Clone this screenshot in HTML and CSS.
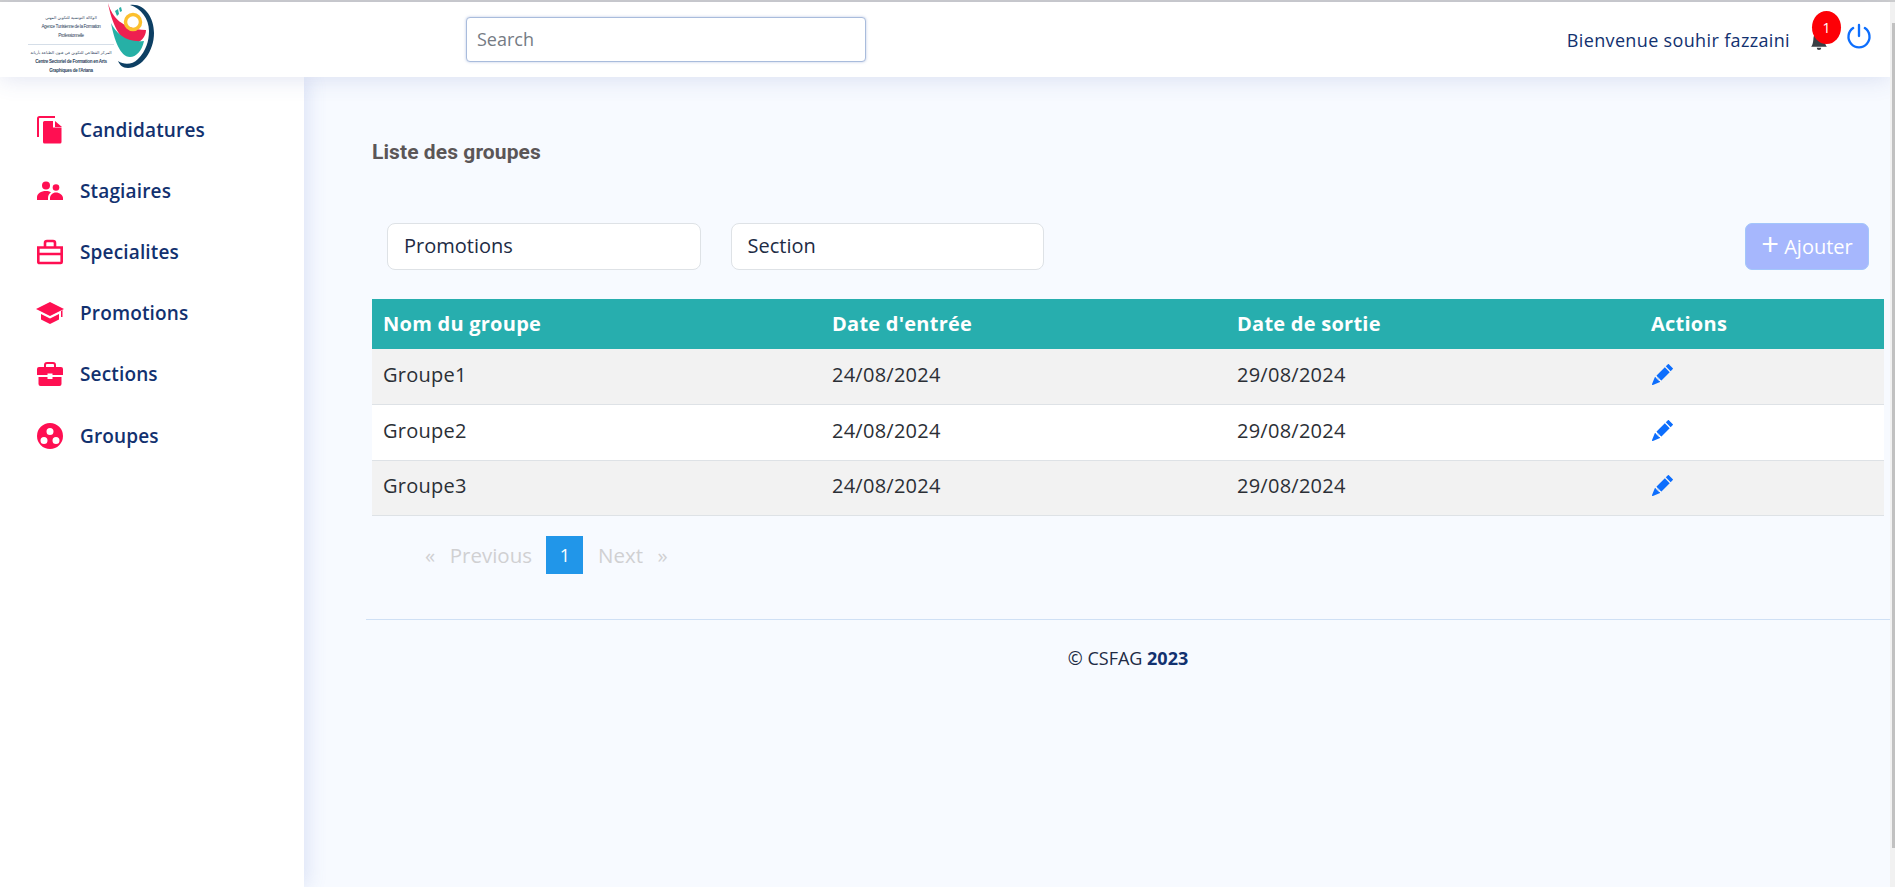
FILE: index.html
```html
<!DOCTYPE html>
<html lang="fr">
<head>
    <meta charset="UTF-8">
    <title>Liste des groupes</title>
    <link rel="stylesheet" href="styles.css">
</head>
<body>
    <div class="page">
        <header class="topbar">
            <div class="logo">
                <div class="logo-text">
                    <p class="logo-ar" dir="rtl">الوكالة التونسية للتكوين المهني</p>
                    <p>Agence Tunisienne de la Formation</p>
                    <p>Professionnelle</p>
                    <hr class="logo-rule">
                    <p class="logo-ar" dir="rtl">المركز القطاعي للتكوين في فنون الطباعة بأريانة</p>
                    <p class="logo-bold">Centre Sectoriel de Formation en Arts</p>
                    <p class="logo-bold">Graphiques de l'Ariana</p>
                </div>
                <svg class="logo-mark" viewBox="0 0 46 65" aria-hidden="true">
                    <path d="M22 2 C36 0 46 14 46 30 C46 48 34 65 20 65 C14 65 12 62 10 58 C16 62 24 62 30 56 C38 48 41 38 41 28 C41 16 33 5 22 2Z" fill="#0d3f63"/>
                    <path d="M0 0 C4 14 14 26 38 27 C38 34 32 41 24 40 C12 39 3 18 0 0Z" fill="#ee2050"/>
                    <path d="M3 20 C8 30 18 40 36 38 C34 48 28 54 22 54 C12 54 6 36 3 20Z" fill="#26b0a6"/>
                    <circle cx="25" cy="19" r="7.500" fill="none" stroke="#fcc02e" stroke-width="3.500"/>
                    <path d="M7 8 l3 -2 l1 5 l-2 2Z M11 5 l2 -1 l1 4 l-2 1Z" fill="#26b0a6"/>
                </svg>
            </div>
            <input class="search" type="text" placeholder="Search">
            <div class="user-box">
                <span class="welcome">Bienvenue souhir fazzaini</span>
                <span class="bell">
                    <svg viewBox="0 0 16 16" aria-hidden="true"><path d="M8 16a2 2 0 0 0 2-2H6a2 2 0 0 0 2 2zm.995-14.901a1 1 0 1 0-1.990 0A5.002 5.002 0 0 0 3 6c0 1.098-.500 6-2 7h14c-1.500-1-2-5.902-2-7 0-2.420-1.720-4.440-4.005-4.901z" fill="#3a3f45"/></svg>
                    <span class="badge">1</span>
                </span>
                <svg class="power" viewBox="0 0 24 24" aria-hidden="true"><path d="M12 2.500v9.500" /><path d="M7 5.200a9 9 0 1 0 10 0" /></svg>
            </div>
        </header>

        <div class="layout">
            <aside class="sidebar">
                <a class="nav-item" href="#">
                    <svg viewBox="0 0 26 28" aria-hidden="true"><path d="M1 21V2.500A1.500 1.500 0 0 1 2.500 1H18" fill="none" stroke="#ff0f52" stroke-width="2"/><path d="M6 6.500A1.500 1.500 0 0 1 7.500 5H16v6.500h8.500V26a1.500 1.500 0 0 1-1.500 1.500H7.500A1.500 1.500 0 0 1 6 26Z"/><path d="M18 5l7 6h-7Z"/></svg>
                    Candidatures
                </a>
                <a class="nav-item" href="#">
                    <svg viewBox="0 0 26 20" aria-hidden="true"><circle cx="9" cy="4.500" r="4"/><circle cx="19" cy="6.500" r="3.300"/><path d="M0 19v-2.500C0 12.500 4 10 9 10c2 0 3.500.400 5 1.200-2 1.400-3 3.400-3 5.800v2Z"/><path d="M13 19v-2c0-3 2.600-5.500 6-5.500s7 2.500 7 5.500v2Z"/></svg>
                    Stagiaires
                </a>
                <a class="nav-item" href="#">
                    <svg viewBox="0 0 26 24" aria-hidden="true"><path d="M1.300 7.500h23.400v14.500a1 1 0 0 1-1 1H2.300a1 1 0 0 1-1-1ZM1.300 14h23.400M8 7V3a2 2 0 0 1 2-2h6a2 2 0 0 1 2 2v4" fill="none" stroke="#ff0f52" stroke-width="2.600"/></svg>
                    Specialites
                </a>
                <a class="nav-item" href="#">
                    <svg viewBox="1 0 26 22" aria-hidden="true"><path d="M14 0 28 7l-14 7L0 7Z"/><path d="M5 12l9 4.500 9-4.500v5.500L14 22 5 17.500Z"/><path d="M25 9v6h1.500V8Z"/></svg>
                    Promotions
                </a>
                <a class="nav-item" href="#">
                    <svg viewBox="0 0 26 24" aria-hidden="true"><path d="M8 6V3a2 2 0 0 1 2-2h6a2 2 0 0 1 2 2v3" fill="none" stroke="#ff0f52" stroke-width="2"/><path d="M2 5h22a2 2 0 0 1 2 2v6H15.500v-1.500h-5V13H0V7a2 2 0 0 1 2-2Z"/><path d="M1.500 15h9v2h5v-2h9v7a2 2 0 0 1-2 2h-19a2 2 0 0 1-2-2Z"/></svg>
                    Sections
                </a>
                <a class="nav-item" href="#">
                    <svg viewBox="0 0 26 26" aria-hidden="true"><path fill-rule="evenodd" d="M13 0a13 13 0 1 1 0 26 13 13 0 0 1 0-26Zm0 5a3.500 3.500 0 1 0 0 7 3.500 3.500 0 0 0 0-7ZM7 14a3.500 3.500 0 1 0 0 7 3.500 3.500 0 0 0 0-7Zm12 0a3.500 3.500 0 1 0 0 7 3.500 3.500 0 0 0 0-7Z"/></svg>
                    Groupes
                </a>
            </aside>

            <main class="content">
                <h2 class="page-title">Liste des groupes</h2>

                <div class="filters">
                    <div class="select-box">Promotions</div>
                    <div class="select-box">Section</div>
                    <button class="add-btn" type="button"><span class="plus">+</span> Ajouter</button>
                </div>

                <table class="groups">
                    <thead>
                        <tr>
                            <th class="col-name">Nom du groupe</th>
                            <th class="col-in">Date d'entrée</th>
                            <th class="col-out">Date de sortie</th>
                            <th>Actions</th>
                        </tr>
                    </thead>
                    <tbody>
                        <tr>
                            <td>Groupe1</td>
                            <td>24/08/2024</td>
                            <td>29/08/2024</td>
                            <td><svg class="pencil" viewBox="0 0 16 16" aria-hidden="true"><path d="M12.854.146a.500.500 0 0 0-.707 0L10.500 1.793 14.207 5.500l1.647-1.646a.500.500 0 0 0 0-.708l-3-3zm.646 6.061L9.793 2.500 3.293 9H3.500a.500.500 0 0 1 .500.500v.500h.500a.500.500 0 0 1 .500.500v.500h.500a.500.500 0 0 1 .500.500v.500h.500a.500.500 0 0 1 .500.500v.207l6.500-6.500zm-7.468 7.468A.500.500 0 0 1 6 13.500V13h-.500a.500.500 0 0 1-.500-.500V12h-.500a.500.500 0 0 1-.500-.500V11h-.500a.500.500 0 0 1-.500-.500V10h-.500a.499.499 0 0 1-.175-.032l-.179.178a.500.500 0 0 0-.110.168l-2 5a.500.500 0 0 0 .650.650l5-2a.500.500 0 0 0 .168-.110l.178-.178z"/></svg></td>
                        </tr>
                        <tr>
                            <td>Groupe2</td>
                            <td>24/08/2024</td>
                            <td>29/08/2024</td>
                            <td><svg class="pencil" viewBox="0 0 16 16" aria-hidden="true"><path d="M12.854.146a.500.500 0 0 0-.707 0L10.500 1.793 14.207 5.500l1.647-1.646a.500.500 0 0 0 0-.708l-3-3zm.646 6.061L9.793 2.500 3.293 9H3.500a.500.500 0 0 1 .500.500v.500h.500a.500.500 0 0 1 .500.500v.500h.500a.500.500 0 0 1 .500.500v.500h.500a.500.500 0 0 1 .500.500v.207l6.500-6.500zm-7.468 7.468A.500.500 0 0 1 6 13.500V13h-.500a.500.500 0 0 1-.500-.500V12h-.500a.500.500 0 0 1-.500-.500V11h-.500a.500.500 0 0 1-.500-.500V10h-.500a.499.499 0 0 1-.175-.032l-.179.178a.500.500 0 0 0-.110.168l-2 5a.500.500 0 0 0 .650.650l5-2a.500.500 0 0 0 .168-.110l.178-.178z"/></svg></td>
                        </tr>
                        <tr>
                            <td>Groupe3</td>
                            <td>24/08/2024</td>
                            <td>29/08/2024</td>
                            <td><svg class="pencil" viewBox="0 0 16 16" aria-hidden="true"><path d="M12.854.146a.500.500 0 0 0-.707 0L10.500 1.793 14.207 5.500l1.647-1.646a.500.500 0 0 0 0-.708l-3-3zm.646 6.061L9.793 2.500 3.293 9H3.500a.500.500 0 0 1 .500.500v.500h.500a.500.500 0 0 1 .500.500v.500h.500a.500.500 0 0 1 .500.500v.500h.500a.500.500 0 0 1 .500.500v.207l6.500-6.500zm-7.468 7.468A.500.500 0 0 1 6 13.500V13h-.500a.500.500 0 0 1-.500-.500V12h-.500a.500.500 0 0 1-.500-.500V11h-.500a.500.500 0 0 1-.500-.500V10h-.500a.499.499 0 0 1-.175-.032l-.179.178a.500.500 0 0 0-.110.168l-2 5a.500.500 0 0 0 .650.650l5-2a.500.500 0 0 0 .168-.110l.178-.178z"/></svg></td>
                        </tr>
                    </tbody>
                </table>

                <div class="pagination">
                    <span>«</span>
                    <span>Previous</span>
                    <span class="current">1</span>
                    <span>Next</span>
                    <span>»</span>
                </div>

                <footer class="footer">© CSFAG <b>2023</b></footer>
            </main>
        </div>
        <div class="scrollbar"><div class="scroll-thumb"></div></div>
    </div>
</body>
</html>
```

FILE: styles.css
```css
* {
    box-sizing: border-box;
}
html, body {
    height: 100%;
    margin: 0;
    overflow: hidden;
}
body {
    font-family: "Open Sans", Arial, sans-serif;
    background-color: #f7faff;
    color: #2b2f36;
}
.page {
    position: relative;
    height: 887px;
    display: flex;
    flex-direction: column;
    border-top: 2px solid #cfcfcf;
    padding-right: 5px;
}

/* top bar */
.topbar {
    height: 75px;
    flex: none;
    display: flex;
    align-items: center;
    background: white;
    position: relative;
    z-index: 2;
    box-shadow: 0 2px 22px rgba(70, 90, 170, 0.16);
    padding-right: 17px;
}
.logo {
    width: 466px;
    height: 100%;
    flex: none;
    display: flex;
    align-items: flex-start;
    padding-left: 28px;
}
.logo-text {
    width: 86px;
    flex: none;
    padding-top: 11px;
    text-align: center;
    font-family: "Liberation Sans", Arial, sans-serif;
    font-size: 4.600px;
    letter-spacing: -0.400px;
    line-height: 9.200px;
    color: #2f4560;
    white-space: nowrap;
}
.logo-text p {
    margin: 0;
}
.logo-ar {
    font-family: "DejaVu Sans", sans-serif;
    font-size: 4px;
    letter-spacing: 0;
}
.logo-bold {
    font-weight: bold;
    letter-spacing: -0.300px;
}
.logo-rule {
    border: none;
    border-top: 1px solid #d5dee8;
    margin: 3px 0;
}
.logo-mark {
    width: 46px;
    height: 65px;
    flex: none;
    margin: 1px 0 0 -6px;
}
.search {
    width: 400px;
    height: 45px;
    flex: none;
    padding: 0 10px 2px;
    border: 1px solid #a9bcdc;
    border-radius: 4px;
    font-family: "Open Sans", sans-serif;
    font-size: 18px;
    box-shadow: 0 0 3px rgba(90, 120, 190, 0.4);
}
.search::placeholder {
    color: #757b84;
}
.user-box {
    margin-left: auto;
    display: flex;
    align-items: center;
    height: 100%;
}
.welcome {
    font-size: 18px;
    font-weight: 500;
    letter-spacing: 0.350px;
    color: #12316f;
    margin-right: 20px;
}
.bell {
    position: relative;
    width: 18px;
    height: 18px;
    margin-right: 17px;
    margin-top: 3px;
}
.bell svg {
    display: block;
    width: 18px;
    height: 18px;
}
.badge {
    position: absolute;
    left: 2px;
    top: -21px;
    width: 29px;
    height: 33px;
    border-radius: 50%;
    background-color: #fd0006;
    color: white;
    font-size: 14px;
    line-height: 33px;
    text-align: center;
}
.power {
    width: 28px;
    height: 28px;
    margin-top: -7px;
    fill: none;
    stroke: #0d6efd;
    stroke-width: 2;
    stroke-linecap: round;
}

/* sidebar + content */
.layout {
    flex: 1;
    display: flex;
    min-height: 0;
}
.sidebar {
    width: 304px;
    flex: none;
    background: white;
    padding: 22px 0 0 37px;
    box-shadow: 4px 0 18px rgba(90, 110, 200, 0.16);
}
.nav-item {
    display: flex;
    align-items: center;
    height: 61.200px;
    font-size: 19px;
    font-weight: 600;
    letter-spacing: 0.150px;
    color: #12316f;
    text-decoration: none;
}
.nav-item svg {
    width: 26px;
    height: 28px;
    margin-right: 17px;
    flex: none;
    fill: #ff0f52;
    overflow: visible;
}
.content {
    flex: 1;
    min-width: 0;
    padding: 62px 6px 0 68px;
}
.page-title {
    margin: 0;
    height: 27px;
    font-family: Roboto, Arial, sans-serif;
    font-size: 21px;
    letter-spacing: 0.080px;
    line-height: 27px;
    font-weight: bold;
    color: #5b5657;
}
.filters {
    display: flex;
    align-items: center;
    margin-top: 57px;
    padding: 0 15px;
}
.select-box {
    width: 313.500px;
    height: 47px;
    margin-right: 30px;
    padding: 0 16px;
    line-height: 44px;
    background: white;
    border: 1px solid #dee2e6;
    border-radius: 8px;
    font-size: 20px;
    color: #212b44;
}
.add-btn {
    margin-left: auto;
    width: 124px;
    height: 47px;
    padding: 0;
    background-color: #a6b7fd;
    border: 1px solid #a3c6fb;
    border-radius: 7px;
    color: white;
    font-family: "Open Sans", sans-serif;
    font-size: 20px;
}
.plus {
    font-size: 31px;
    line-height: 20px;
    vertical-align: -2px;
}

/* table */
.groups {
    width: 1512px;
    margin-top: 29px;
    border-collapse: collapse;
    table-layout: fixed;
    font-size: 20px;
    letter-spacing: 0.250px;
}
.groups th {
    height: 50px;
    padding: 0 11px 2px;
    text-align: left;
    background-color: #27aeae;
    color: white;
    font-weight: bold;
}
.groups td {
    height: 55.500px;
    padding: 0 11px 4px;
    border-bottom: 1px solid #dee2e6;
    background-color: white;
}
.groups tbody tr:nth-child(odd) td {
    background-color: #f2f2f2;
}
.col-name {
    width: 449px;
}
.col-in {
    width: 405px;
}
.col-out {
    width: 414px;
}
.pencil {
    display: block;
    width: 21px;
    height: 21px;
    margin-left: 1px;
    fill: #0d6efd;
}

/* pagination */
.pagination {
    display: flex;
    align-items: center;
    height: 38px;
    margin-top: 20px;
    padding-left: 53px;
    font-size: 20.500px;
    color: #d0d0d2;
}
.pagination span {
    margin-right: 14.500px;
}
.pagination .current {
    width: 37px;
    height: 38px;
    line-height: 38px;
    text-align: center;
    background-color: #2196e9;
    color: white;
    font-size: 18px;
}

/* footer */
.footer {
    margin: 45px -6px 0 -6px;
    padding-top: 26px;
    border-top: 1px solid #cfe0f5;
    text-align: center;
    font-size: 18px;
    color: #212b44;
}
.footer b {
    color: #12316f;
}

/* page scrollbar */
.scrollbar {
    position: absolute;
    top: 0;
    right: 0;
    bottom: 0;
    width: 5px;
    padding-left: 2px;
    background-color: #f1f1f1;
    z-index: 3;
}
.scroll-thumb {
    margin-top: 21px;
    height: 825px;
    background-color: #c1c1c1;
}
```
